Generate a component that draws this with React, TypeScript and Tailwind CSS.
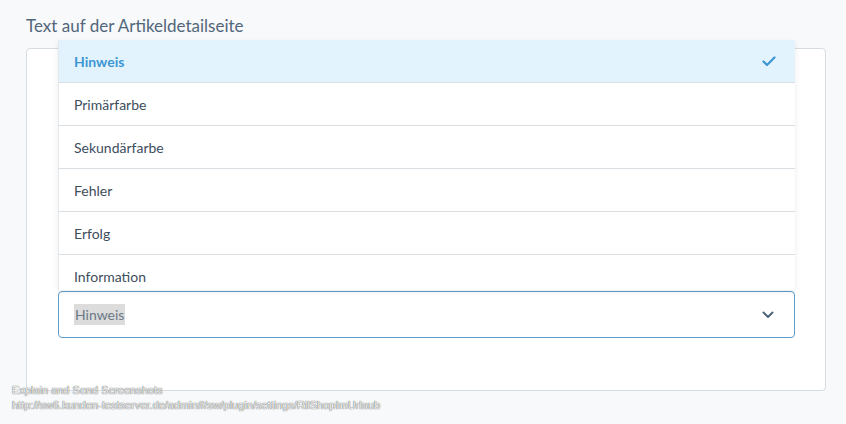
import React from 'react';

const options = ['Hinweis', 'Primärfarbe', 'Sekundärfarbe', 'Fehler', 'Erfolg', 'Information'];

export default function App() {
  const selected = 'Hinweis';

  return (
    <div className="relative w-[846px] h-[424px] overflow-hidden bg-[#f7f9fb] font-['Lato',sans-serif] text-[#52667a]">
      <div className="pl-[26px] pt-[14px]">
        <h2 className="text-[17px] leading-[24px] text-[#52667a]">Text auf der Artikeldetailseite</h2>

        {/* Card */}
        <div className="mt-[10px] w-[800px] h-[343px] bg-white border border-[#d6dce2] rounded-[4px] pl-[31px] pr-[30px] pt-[242px]">
          <div className="flex items-center justify-between h-[47px] border border-[#5e9ecb] rounded-[4px] pl-[15px] pr-[20px] bg-white">
            <span className="text-[14px] text-[#6a7886] bg-[#dcdcdc] px-[1px]">Hinweis</span>
            <svg width="12" height="8" viewBox="0 0 12 8" fill="none">
              <path d="M1.5 1.5 L6 6 L10.5 1.5" stroke="#52667a" strokeWidth="2" strokeLinecap="round" strokeLinejoin="round" />
            </svg>
          </div>
        </div>
      </div>

      {/* Open dropdown list */}
      <div className="absolute left-[58px] top-[40px] w-[737px] h-[250px] overflow-hidden bg-white border-l border-[#e4e9ee] shadow-[0_2px_6px_rgba(0,0,0,0.08)]">
        {options.map((opt) => {
          const active = opt === selected;
          return (
            <div
              key={opt}
              className={`flex items-center justify-between h-[43px] px-[15px] border-b border-[#dadfe4] text-[14px] ${
                active ? 'bg-[#e3f3fd] text-[#3b96d4] font-bold' : 'text-[#3d4d5c]'
              }`}
            >
              <span>{opt}</span>
              {active && (
                <svg width="14" height="11" viewBox="0 0 14 11" fill="none" className="mr-[4px]">
                  <path d="M1.5 5.5 L5 9 L12.5 1.5" stroke="#3b96d4" strokeWidth="2.2" strokeLinecap="round" strokeLinejoin="round" />
                </svg>
              )}
            </div>
          );
        })}
      </div>

      {/* Screenshot tool overlay */}
      <div className="absolute left-[12px] top-[383px] font-['Liberation_Sans',sans-serif] text-[11px] leading-[15px] text-[#f0f0f0] [text-shadow:0_0_1px_#6b6b6b,0_0_1px_#6b6b6b]">
        <div>Explain and Send Screenshots</div>
        <div>http://sw6.kunden-testserver.de/admin#/sw/plugin/settings/RilShopImUrlaub</div>
      </div>
    </div>
  );
}
